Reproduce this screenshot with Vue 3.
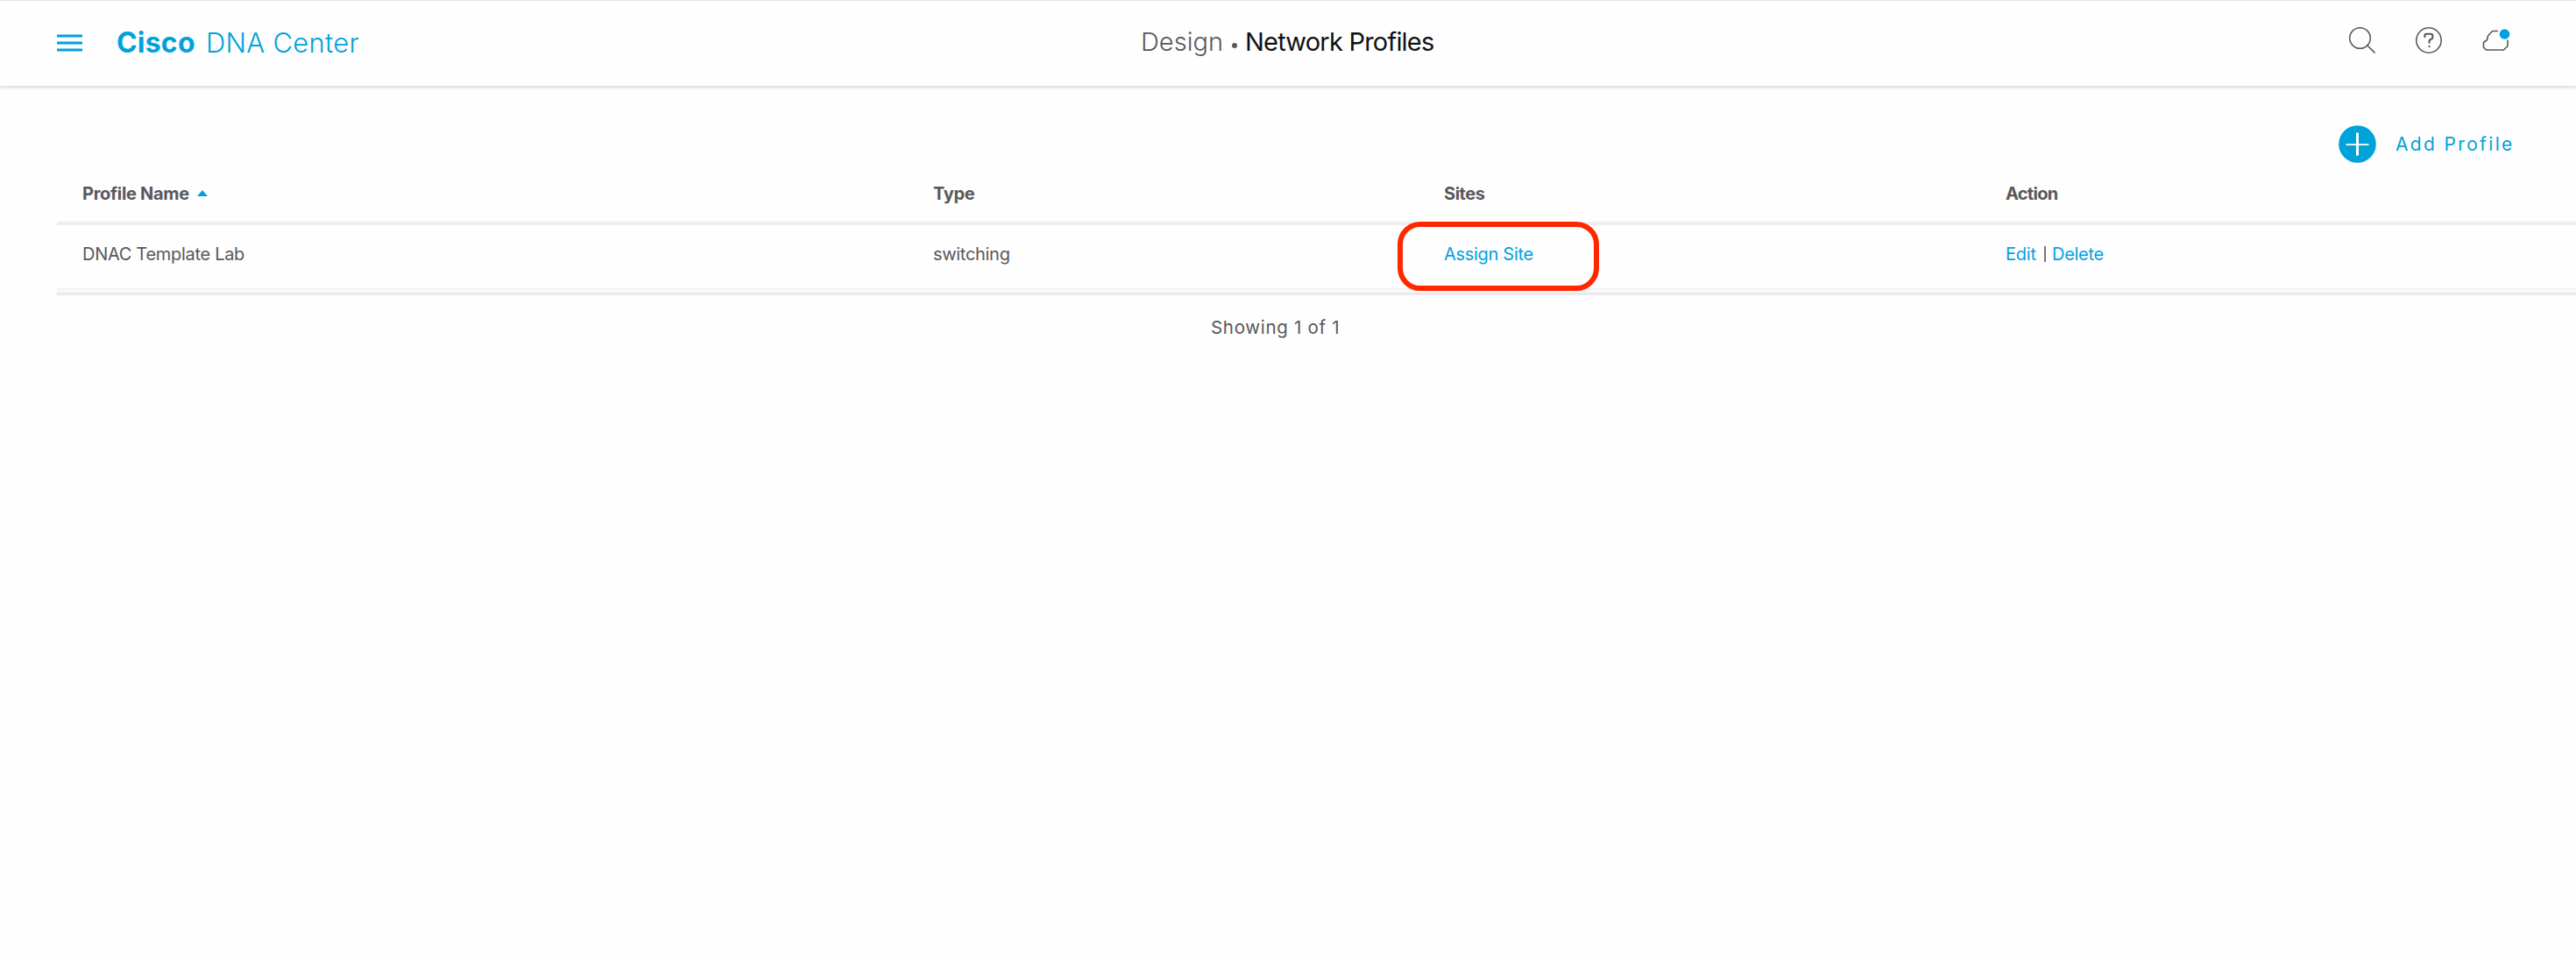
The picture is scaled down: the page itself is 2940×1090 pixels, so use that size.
<script setup>
const columns = [
  { key: 'name', label: 'Profile Name' },
  { key: 'type', label: 'Type' },
  { key: 'sites', label: 'Sites' },
  { key: 'action', label: 'Action' },
]
const profiles = [{ name: 'DNAC Template Lab', type: 'switching' }]
</script>

<template>
  <div class="page">
    <header class="topbar">
      <div class="left">
        <svg class="menu" width="30" height="20" viewBox="0 0 30 20"><path d="M0 2h29M0 10h29M0 18h29" stroke="#00a0e0" stroke-width="3" /></svg>
        <div class="brand"><b>Cisco</b><span>DNA Center</span></div>
      </div>
      <div class="crumbs"><span class="parent">Design</span><i class="dot"></i><span class="current">Network Profiles</span></div>
      <div class="tools">
        <svg width="30" height="30" viewBox="0 0 30 30"><circle cx="12.5" cy="12.5" r="11.8" /><path d="M21 21l8.5 8.5" /></svg>
        <svg width="30" height="30" viewBox="0 0 30 30"><circle cx="15" cy="15" r="14.2" /><path stroke-width="2" d="M10.4 12V9.5q0-1.800 1.800-1.800h5q2.200 0 2.200 2.200V12q0 1.200-1.200 1.500-2.600.7-2.600 3v2M15.600 21v2" /></svg>
        <svg width="32" height="30" viewBox="0 0 32 30"><path d="M18 4.500H11.500L6.500 10L5.500 14.500L1.500 17.500V23L4.500 26H24.500L29 21.500V14.500" stroke-linejoin="round" /><circle class="status" cx="25.500" cy="8" r="5.800" /></svg>
      </div>
    </header>
    <main>
      <div class="actions">
        <svg width="43" height="43" viewBox="0 0 43 43"><circle cx="21.500" cy="21.500" r="21.300" fill="#00a2da" /><path d="M8.500 22h26" stroke="#fff" stroke-width="1.800" /><path d="M21.500 8.500v26" stroke="#fff" stroke-width="3" /></svg>
        <span class="add">Add Profile</span>
      </div>
      <section class="table">
        <div class="row head">
          <div v-for="(c, i) in columns" :key="c.key" class="cell" :class="c.key">
            <span>{{ c.label }}</span>
            <svg v-if="i === 0" class="sort" width="12" height="7" viewBox="0 0 12 7"><path d="M0 7L6 0l6 7z" fill="#00a0e0" /></svg>
          </div>
        </div>
        <div v-for="p in profiles" :key="p.name" class="row body">
          <div class="cell name">{{ p.name }}</div>
          <div class="cell type">{{ p.type }}</div>
          <div class="cell sites marked"><a>Assign Site</a></div>
          <div class="cell action"><a class="edit">Edit</a><i class="bar"></i><a class="delete">Delete</a></div>
        </div>
        <div class="tail"></div>
      </section>
      <div class="count">Showing {{ profiles.length }} of {{ profiles.length }}</div>
    </main>
  </div>
</template>

<style>
body { background: #fefefe; }
</style>

<style scoped>
.page { width: 2940px; height: 1090px; overflow: hidden; font-family: Inter, "Liberation Sans", sans-serif; color: #58585b; background: #fefefe; }
.topbar { height: 98px; box-sizing: border-box; border-top: 1px solid #e6e5ec; display: grid; grid-template-columns: 1302px 1fr 260px; background: #fefefe; box-shadow: 0 2px 3px #ddd8dd; }
.left { display: flex; padding: 38px 0 0 65px; }
.brand { display: flex; margin: -10px 0 0 38px; line-height: 40px; color: #00a2da; white-space: nowrap; }
.brand b { width: 102px; font-size: 32px; font-weight: 700; letter-spacing: 0.2px; }
.brand span { font-size: 31px; font-weight: 300; letter-spacing: 0.25px; }
.crumbs { display: flex; padding-top: 27px; font-size: 29px; line-height: 40px; white-space: nowrap; }
.parent { font-weight: 300; }
.current { color: #111; font-weight: 400; letter-spacing: -0.78px; }
.dot { width: 6px; height: 6px; border-radius: 50%; background: #58585b; margin: 21px 9px 0 10px; }
.tools { display: flex; gap: 46px; padding: 30px 0 0 1px; }
.tools svg { fill: none; stroke: #58585b; stroke-width: 1.6; }
.tools .status { fill: #00a0e0; stroke: none; }
main { padding-left: 65px; }
.actions { height: 111px; display: flex; padding: 45px 0 0 2604px; box-sizing: border-box; color: #00a2da; font-size: 21px; line-height: 43px; }
.add { margin-left: 22px; letter-spacing: 2.35px; white-space: nowrap; }
.row { display: grid; grid-template-columns: 971px 583px 641px 1fr; padding-left: 29px; font-size: 20px; box-sizing: border-box; }
.head { height: 48px; border-bottom: 4px solid #f0ecf0; font-weight: 700; line-height: 24px; }
.body { height: 72px; line-height: 24px; padding-top: 21px; }
.cell { display: flex; white-space: nowrap; letter-spacing: -0.3px; }
.head .sites { letter-spacing: -0.45px; }
.head .action { letter-spacing: -0.7px; }
.sort { margin: 8px 0 0 9px; }
.marked { position: relative; }
.marked::before { content: ""; position: absolute; left: -53px; top: -25px; width: 230px; height: 79px; box-sizing: border-box; border: 6px solid #ff2600; border-radius: 26px; }
.edit { width: 44px; letter-spacing: -0.2px; }
.bar { width: 2px; height: 18px; margin: 3px 7px 0 0; background: #77777a; }
.delete { letter-spacing: -0.3px; }
a { color: #00a2e0; }
.tail { height: 8px; box-sizing: border-box; border-top: 1px solid #f2edf2; background: #f9f7fa; border-bottom: 3px solid #ece8ed; }
.count { padding: 25px 0 0 1317px; font-size: 20.5px; line-height: 24px; letter-spacing: 0.7px; white-space: nowrap; }
</style>
